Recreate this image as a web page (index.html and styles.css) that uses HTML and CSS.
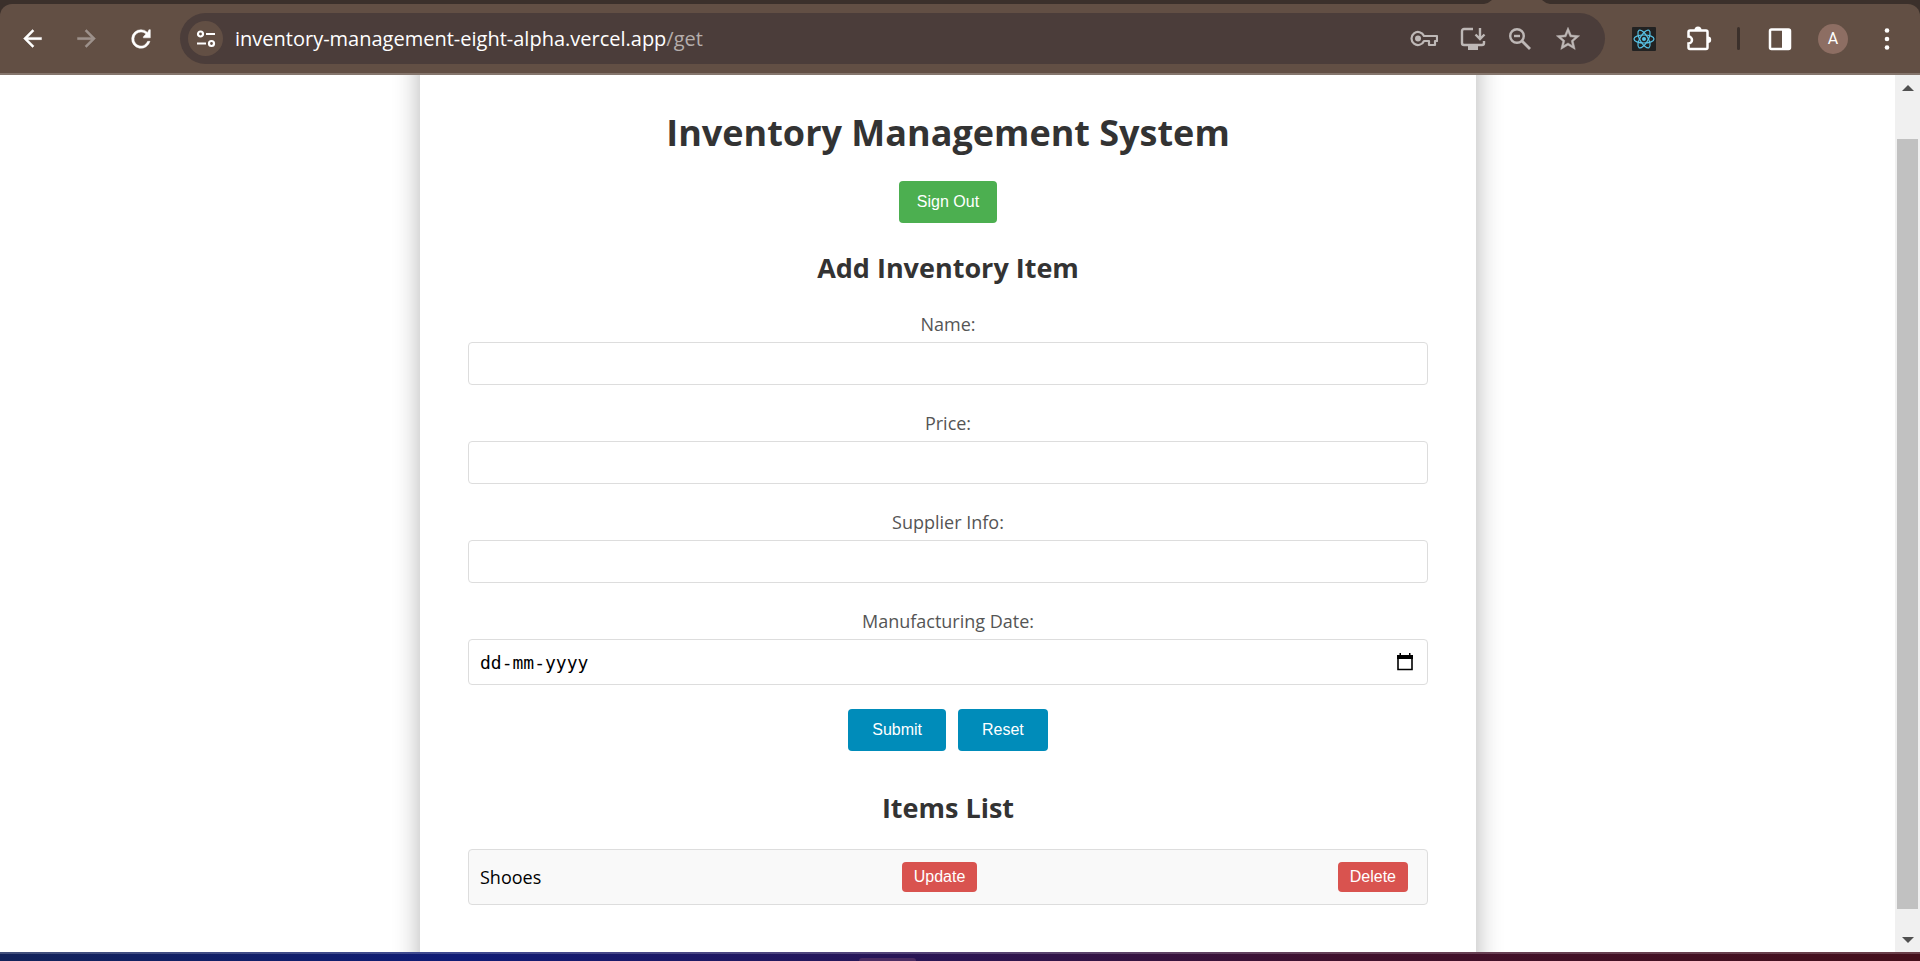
FILE: index.html
```html
<!DOCTYPE html>
<html lang="en">
<head>
<meta charset="utf-8">
<title>Inventory Management System</title>
<link rel="stylesheet" href="styles.css">
</head>
<body>
<header class="browser">
  <div class="tabstrip">
    <svg class="tab-foot" viewBox="0 0 66 4" aria-hidden="true"><path d="M0 4Q5 3 8 0H58Q61 3 66 4Z" fill="#624f44"/></svg>
  </div>
  <div class="toolbar">
    <nav class="nav-buttons">
      <button class="icon-btn" type="button" aria-label="Back"><svg width="27" height="27" viewBox="0 0 24 24" fill="#fff" stroke="#fff" stroke-width=".4"><path d="M20 11H7.8l5.6-5.6L12 4l-8 8 8 8 1.4-1.4L7.8 13H20z"/></svg></button>
      <button class="icon-btn" type="button" aria-label="Forward"><svg width="27" height="27" viewBox="0 0 24 24" fill="#9d918b" stroke="#9d918b" stroke-width=".4"><path d="M12 4l-1.4 1.4 5.6 5.6H4v2h12.200l-5.600 5.600L12 20l8-8z"/></svg></button>
      <button class="icon-btn" type="button" aria-label="Reload"><svg width="28" height="28" viewBox="0 0 24 24" fill="#fff" stroke="#fff" stroke-width=".4"><path d="M17.650 6.350A7.950 7.950 0 0 0 12 4a8 8 0 1 0 7.730 10h-2.080A6 6 0 1 1 12 6c1.660 0 3.140.69 4.220 1.780L14 10v1h6V4h-1.200z"/></svg></button>
    </nav>
    <div class="address">
      <button class="site-info" type="button" aria-label="View site information"><svg width="20" height="18" viewBox="0 0 20 18" fill="none" stroke="#fff" stroke-width="2.200"><circle cx="4.500" cy="4" r="2.500"/><path d="M10 4h9M1 13.500h9"/><circle cx="15.500" cy="13.500" r="2.500"/></svg></button>
      <div class="url">inventory-management-eight-alpha.vercel.app<span class="url-path">/get</span></div>
      <div class="address-actions">
        <button class="icon-btn" type="button" aria-label="Passwords"><svg width="28" height="18" viewBox="0 0 28 18" fill="none" stroke="#beb8b6" stroke-width="2.200"><path d="M14 6h13v5h-2v4h-6v-4h-5A6.500 6.500 0 1 1 14 6z" stroke-linejoin="round"/><circle cx="8" cy="8.500" r="3" fill="#beb8b6" stroke="none"/></svg></button>
        <button class="icon-btn" type="button" aria-label="Install app"><svg width="26" height="24" viewBox="0 0 26 24" fill="none" stroke="#beb8b6" stroke-width="2.400"><path d="M13 2H4a2 2 0 0 0-2 2v12a2 2 0 0 0 2 2h18a2 2 0 0 0 2-2v-2M20 1v11M15.500 7.500L20 12l4.500-4.500"/><path d="M8 19h10v4H8z" fill="#beb8b6" stroke="none"/></svg></button>
        <button class="icon-btn" type="button" aria-label="Zoom"><svg width="24" height="24" viewBox="0 0 24 24" fill="none" stroke="#beb8b6" stroke-width="2.400"><circle cx="9" cy="9" r="6.800"/><path d="M6 9h6"/><path d="M13.500 13.500l8.500 8.500" stroke-width="2.800"/></svg></button>
        <button class="icon-btn" type="button" aria-label="Bookmark"><svg width="28" height="28" viewBox="0 0 24 24" fill="#beb8b6" stroke="#beb8b6" stroke-width=".4"><path d="M22 9.240l-7.190-.62L12 2 9.190 8.630 2 9.240l5.460 4.730L5.820 21 12 17.270 18.180 21l-1.630-7.030zM12 15.400l-3.760 2.270 1-4.280-3.320-2.880 4.380-.38L12 6.100l1.710 4.040 4.380.38-3.320 2.880 1 4.280z"/></svg></button>
      </div>
    </div>
    <div class="extensions">
      <button class="icon-btn" type="button" aria-label="React Developer Tools"><svg width="24" height="24" viewBox="0 0 24 24"><rect width="24" height="24" rx="1" fill="#222"/><g fill="none" stroke="#58c4e8" stroke-width="1.200"><ellipse cx="12" cy="12" rx="10" ry="4"/><ellipse cx="12" cy="12" rx="10" ry="4" transform="rotate(60 12 12)"/><ellipse cx="12" cy="12" rx="10" ry="4" transform="rotate(120 12 12)"/></g><circle cx="12" cy="12" r="2" fill="#58c4e8"/></svg></button>
      <button class="icon-btn" type="button" aria-label="Extensions"><svg width="26" height="26" viewBox="0 0 26 26"><path d="M4 4.500H20a1.500 1.500 0 0 1 1.500 1.500V21.500A1.500 1.500 0 0 1 20 23H4A1.500 1.500 0 0 1 2.500 21.500v-4a3.500 3.500 0 0 0 0-7V6A1.500 1.500 0 0 1 4 4.500z" fill="none" stroke="#fff" stroke-width="2.500"/><path d="M8.500 4a3.500 3.500 0 0 1 7 0zM22 10.500a3.200 3.200 0 0 1 0 6.400z" fill="#fff"/></svg></button>
      <span class="divider"></span>
      <button class="icon-btn" type="button" aria-label="Side panel"><svg width="24" height="24" viewBox="0 0 24 24"><rect x="2" y="2.500" width="20" height="19.500" rx="1.500" fill="none" stroke="#fff" stroke-width="2.500"/><path d="M14 2h8v20h-8z" fill="#fff"/></svg></button>
      <button class="avatar" type="button">A</button>
      <button class="icon-btn" type="button" aria-label="Menu"><svg width="6" height="24" viewBox="0 0 6 24" fill="#fff"><circle cx="3" cy="3.500" r="2.300"/><circle cx="3" cy="12" r="2.300"/><circle cx="3" cy="20.500" r="2.300"/></svg></button>
    </div>
  </div>
</header>
<div class="viewport">
  <main class="page">
    <section class="card">
      <h1 class="title">Inventory Management System</h1>
      <button class="btn btn-signout" type="button">Sign Out</button>
      <h2 class="subtitle">Add Inventory Item</h2>
      <form class="form">
        <div class="field"><label class="label" for="name">Name:</label><input class="input" id="name" type="text"></div>
        <div class="field"><label class="label" for="price">Price:</label><input class="input" id="price" type="text"></div>
        <div class="field"><label class="label" for="supplier">Supplier Info:</label><input class="input" id="supplier" type="text"></div>
        <div class="field">
          <label class="label" for="date">Manufacturing Date:</label>
          <div class="date-box">
            <input class="date-input" id="date" type="text" placeholder="dd-mm-yyyy">
            <button class="icon-btn" type="button" aria-label="Open calendar"><svg width="16" height="18" viewBox="0 0 16 18"><path d="M1 3h14v13.500H1z" fill="none" stroke="#000" stroke-width="1.600"/><path d="M0 2h16v4H0zM2.500 0H4v3H2.500zM12 0h1.500v3H12z"/></svg></button>
          </div>
        </div>
        <div class="form-actions">
          <button class="btn btn-primary" type="submit">Submit</button>
          <button class="btn btn-primary" type="reset">Reset</button>
        </div>
      </form>
      <h2 class="subtitle subtitle-list">Items List</h2>
      <ul class="items">
        <li class="item"><span class="item-name">Shooes</span><button class="btn btn-danger" type="button">Update</button><button class="btn btn-danger" type="button">Delete</button></li>
      </ul>
    </section>
  </main>
  <div class="scrollbar" aria-hidden="true">
    <svg class="scroll-arrow" width="12" height="6" viewBox="0 0 12 6" fill="#505050"><path d="M6 0l6 6H0z"/></svg>
    <div class="scroll-track"><div class="scroll-thumb"></div></div>
    <svg class="scroll-arrow" width="12" height="6" viewBox="0 0 12 6" fill="#505050"><path d="M0 0h12L6 6z"/></svg>
  </div>
</div>
<footer class="taskbar"><span class="taskbar-item"></span></footer>
</body>
</html>
```
FILE: styles.css
```css
* { box-sizing: border-box; }

body {
  display: flex;
  flex-direction: column;
  height: 100vh;
  margin: 0;
  overflow: hidden;
  background: #fff;
  font-family: "Open Sans", "Noto Sans", sans-serif;
}

button { font: inherit; cursor: pointer; }

.browser { flex: none; background: #3b302b; }
.tabstrip { display: flex; justify-content: flex-end; height: 4px; padding-right: 366px; }
.tab-foot { width: 74px; height: 4px; }

.toolbar {
  display: flex;
  align-items: center;
  height: 71px;
  padding: 0 30px 0 19px;
  border-bottom: 2px solid #85766d;
  border-radius: 12px 12px 0 0;
  background: #624f44;
}

.icon-btn {
  display: flex;
  flex: none;
  align-items: center;
  justify-content: center;
  padding: 0;
  border: 0;
  background: none;
}

.nav-buttons { display: flex; align-items: center; gap: 27px; }

.address {
  display: flex;
  flex: 1;
  align-items: center;
  height: 51px;
  margin: 0 27px 0 25px;
  padding: 0 23px 0 8px;
  border-radius: 26px;
  background: #4b3d3a;
}

.site-info {
  display: flex;
  align-items: center;
  justify-content: center;
  width: 35px;
  height: 35px;
  padding: 0;
  border: 0;
  border-radius: 50%;
  background: #624f44;
}

.url { flex: 1; margin-left: 12px; color: #fff; font-size: 20px; line-height: 28px; }
.url-path { color: #b5aeac; }
.address-actions { display: flex; align-items: center; gap: 22px; }

.extensions { display: flex; align-items: center; }
.extensions .icon-btn + .icon-btn { margin-left: 30px; }
.divider { width: 3px; height: 23px; margin: 0 28px 0 25px; border-radius: 2px; background: #3b302b; }

.avatar {
  width: 30px;
  height: 30px;
  margin: 0 36px 0 26px;
  padding: 0;
  border: 0;
  border-radius: 50%;
  background: #8d6e63;
  color: #fff;
  font-family: Roboto, sans-serif;
  font-size: 16px;
}

.viewport { display: flex; flex: 1; min-height: 0; }
.page { display: flex; flex: 1; justify-content: center; padding-left: 1px; overflow: hidden; }

/* The card runs past both ends of the scrolled view. */
.card {
  width: 100%;
  max-width: 1056px;
  margin: -40px 0;
  padding: 74px 48px 40px;
  background: #fff;
  box-shadow: 0 0 25px rgba(0, 0, 0, 0.3);
  text-align: center;
}

.title { margin: 0 0 24px; color: #333; font-size: 36px; line-height: 48px; }
.subtitle { margin: 25px 0 24px; color: #333; font-size: 27px; line-height: 40px; }
.subtitle-list { margin: 37px 0 21px; }

.btn {
  border: 0;
  border-radius: 4px;
  color: #fff;
  font-family: "Liberation Sans", Arial, sans-serif;
  font-size: 16px;
  line-height: 18px;
}
.btn-signout { display: block; margin: 0 auto; padding: 12px 18px; background: #4caf50; }
.btn-primary { padding: 12px 24px; background: #008cba; }
.btn-danger { padding: 6px 12px; background: #d9534f; }

.field { margin-bottom: 26px; }
.field:nth-child(4) { margin-bottom: 24px; }
.label { display: block; margin-bottom: 6px; color: #555; font-size: 18px; line-height: 24px; }

.input, .date-box {
  width: 100%;
  border: 1px solid #ddd;
  border-radius: 4px;
  background: #fff;
}
.input { display: block; height: 43px; padding: 0 10px; font-size: 16px; }
.date-box { display: flex; align-items: center; height: 46px; padding: 0 14px 0 11px; }
.date-input {
  flex: 1;
  padding: 0;
  border: 0;
  outline: 0;
  font-family: "DejaVu Sans Mono", monospace;
  font-size: 18px;
}
.date-input::placeholder { color: #000; }

.form-actions { display: flex; justify-content: center; gap: 12px; }

.items { margin: 0; padding: 0; list-style: none; }
.item {
  display: flex;
  align-items: center;
  justify-content: space-between;
  height: 56px;
  padding: 0 19px 0 11px;
  border: 1px solid #ddd;
  border-radius: 4px;
  background: #f9f9f9;
}
.item-name { color: #000; font-size: 18px; line-height: 24px; }

.scrollbar {
  display: flex;
  flex: none;
  flex-direction: column;
  align-items: center;
  width: 25px;
  padding: 10px 2px 9px;
  background: #f0f0f0;
}
.scroll-arrow { flex: none; }
.scroll-track { flex: 1; width: 100%; padding: 48px 0 28px; }
.scroll-thumb { height: 100%; background: #c1c1c1; }

.taskbar {
  display: flex;
  flex: none;
  align-items: flex-end;
  justify-content: center;
  height: 9px;
  padding-right: 146px;
  border-top: 2px solid rgba(255, 255, 255, 0.2);
  background: linear-gradient(90deg, #13235a, #101c76 24%, #2c1552 50%, #40112d 70%, #45101c);
}
.taskbar-item { width: 57px; height: 3px; border-radius: 3px 3px 0 0; background: #4b2c62; }
```
